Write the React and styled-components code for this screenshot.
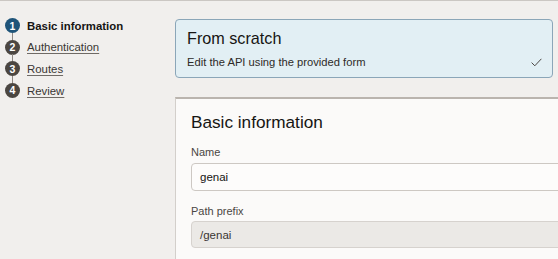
import React from "react";
import styled, { createGlobalStyle } from "styled-components";

const Global = createGlobalStyle`
  html, body { margin: 0; padding: 0; background: #f1efed; overflow: hidden; }
  body { font-family: "Liberation Sans", Arial, sans-serif; color: #161513; }
`;

const Page = styled.div`
  display: flex;
  border-top: 1px solid #cbc7c3;
  height: 258px;
  overflow: hidden;
`;

const Nav = styled.ol`
  list-style: none;
  margin: 0;
  padding: 14px 0 0 5px;
  width: 170px;
  flex: none;
`;

const Step = styled.li`
  position: relative;
  display: flex;
  align-items: center;
  gap: 7px;
  height: 21.6px;
  &::before {
    content: "";
    display: ${(p) => (p.$first ? "none" : "block")};
    position: absolute;
    left: 7px;
    top: -4px;
    height: 7px;
    width: 1px;
    background: #8d8782;
  }
`;

const Badge = styled.span`
  width: 15px;
  height: 15px;
  border-radius: 50%;
  flex: none;
  background: ${(p) => (p.$active ? "#1f5479" : "#4b4641")};
  color: #fff;
  font-size: 10.5px;
  font-weight: 700;
  display: flex;
  align-items: center;
  justify-content: center;
  line-height: 1;
`;

const StepLabel = styled.span`
  font-size: 11.4px;
  font-weight: ${(p) => (p.$active ? 700 : 400)};
  color: ${(p) => (p.$active ? "#161513" : "#3a3633")};
  text-decoration: ${(p) => (p.$active ? "none" : "underline")};
  text-underline-offset: 2px;
  text-decoration-color: #6f6a65;
`;

const Main = styled.div`
  width: 378px;
  flex: none;
  padding-top: 18px;
  display: flex;
  flex-direction: column;
  gap: 19px;
`;

const Choice = styled.div`
  background: #e2eff4;
  border: 1px solid #8ba6b8;
  border-radius: 4px;
  padding: 9px 10px 8px 11px;
`;

const ChoiceTitle = styled.div`
  font-size: 16.2px;
  line-height: 18px;
  color: #161513;
`;

const ChoiceRow = styled.div`
  margin-top: 8px;
  display: flex;
  align-items: center;
  justify-content: space-between;
  font-size: 11.2px;
  line-height: 14px;
  color: #2e2b28;
`;

const Panel = styled.section`
  margin-right: -40px;
  background: #fbfaf9;
  border-top: 2px solid #bab4ae;
  border-left: 1px solid #d3cfcb;
  padding: 13px 0 20px 15px;
`;

const Heading = styled.h2`
  margin: 0;
  font-size: 17.2px;
  font-weight: 400;
  line-height: 20px;
  color: #161513;
`;

const Label = styled.div`
  font-size: 11px;
  line-height: 13px;
  color: #4a4643;
  margin-top: ${(p) => p.$top}px;
`;

const Field = styled.div`
  margin-top: ${(p) => p.$gap}px;
  height: ${(p) => p.$h}px;
  box-sizing: border-box;
  border: 1px solid ${(p) => (p.$readonly ? "#d6d2ce" : "#cdc8c3")};
  background: ${(p) => (p.$readonly ? "#ebe9e6" : "#fdfcfb")};
  border-radius: 4px;
  padding-left: 8px;
  display: flex;
  align-items: center;
  font-size: 11.5px;
  color: ${(p) => (p.$readonly ? "#3a3633" : "#161513")};
`;

const Check = () => (
  <svg width="11" height="9" viewBox="0 0 11 9" fill="none">
    <path d="M0.6 4.6 L3.8 7.8 L10.4 0.8" stroke="#4a4643" strokeWidth="1" />
  </svg>
);

const steps = ["Basic information", "Authentication", "Routes", "Review"];

export default function App() {
  return (
    <>
      <Global />
      <Page>
        <Nav>
          {steps.map((s, i) => (
            <Step key={s} $first={i === 0}>
              <Badge $active={i === 0}>{i + 1}</Badge>
              <StepLabel $active={i === 0}>{s}</StepLabel>
            </Step>
          ))}
        </Nav>
        <Main>
          <Choice>
            <ChoiceTitle>From scratch</ChoiceTitle>
            <ChoiceRow>
              <span>Edit the API using the provided form</span>
              <Check />
            </ChoiceRow>
          </Choice>
          <Panel>
            <Heading>Basic information</Heading>
            <Label $top={14}>Name</Label>
            <Field $gap={4} $h={28}>genai</Field>
            <Label $top={14}>Path prefix</Label>
            <Field $gap={3} $h={27} $readonly>/genai</Field>
          </Panel>
        </Main>
      </Page>
    </>
  );
}
